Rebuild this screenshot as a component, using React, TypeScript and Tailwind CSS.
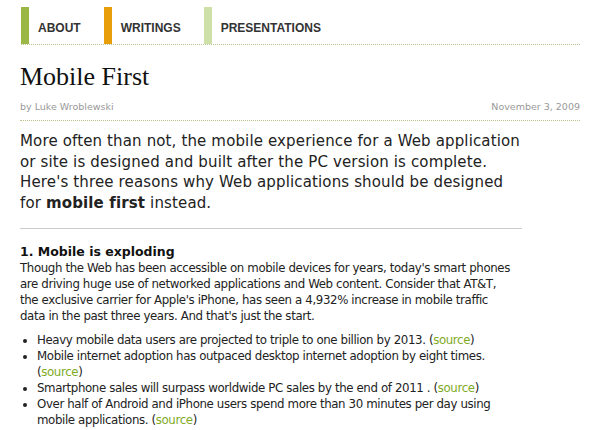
import React from "react";

const sans = { fontFamily: '"DejaVu Sans", Verdana, sans-serif' };

function NavItem({ label, bar }: { label: string; bar: string }) {
  return (
    <div className="flex items-stretch mr-[23px]">
      <div className={`w-[8px] ${bar}`} />
      <a className="self-end pl-[9px] pb-[10px] text-[12px] font-bold leading-none text-[#333] [font-family:'Liberation_Sans',Arial,sans-serif]">
        {label}
      </a>
    </div>
  );
}

function Source() {
  return (
    <>
      (<a className="text-[#7fab1f]">source</a>)
    </>
  );
}

export default function App() {
  return (
    <div className="w-[600px] h-[430px] overflow-hidden bg-white pl-[20px] pr-[20px]" style={sans}>
      <nav className="ml-[1px] mt-[7px] flex h-[38px] border-b border-dotted border-[#b5c48a]">
        <NavItem label="ABOUT" bar="bg-[#9bb847]" />
        <NavItem label="WRITINGS" bar="bg-[#e89d0b]" />
        <NavItem label="PRESENTATIONS" bar="bg-[#cde0a9]" />
      </nav>

      <h1 className="mt-[17px] text-[26px] leading-[30px] text-[#111] [font-family:'Liberation_Serif',Georgia,serif]">
        Mobile First
      </h1>
      <div className="mt-[9px] flex justify-between pb-[7px] border-b border-dotted border-[#b5c48a] text-[9.5px] leading-[12px] text-[#999]">
        <span>by Luke Wroblewski</span>
        <span>November 3, 2009</span>
      </div>

      <p className="mt-[10px] w-[504px] text-[15px] tracking-[0.14px] leading-[20.5px] text-[#222]">
        More often than not, the mobile experience for a Web application or site is designed and built after the PC
        version is complete. Here's three reasons why Web applications should be designed for{" "}
        <strong>mobile first</strong> instead.
      </p>

      <hr className="mt-[15px] w-[502px] border-t border-[#ccc]" />

      <h3 className="mt-[15px] text-[12.5px] font-bold leading-[16px] text-[#111]">1. Mobile is exploding</h3>
      <p className="w-[495px] text-[11.8px] tracking-[-0.38px] leading-[16px] text-[#222]">
        Though the Web has been accessible on mobile devices for years, today's smart phones are driving huge use of
        networked applications and Web content. Consider that AT&amp;T, the exclusive carrier for Apple's iPhone, has
        seen a 4,932% increase in mobile traffic data in the past three years. And that's just the start.
      </p>

      <ul className="mt-[8px] w-[495px] list-disc pl-[17px] text-[11.8px] tracking-[-0.38px] leading-[16px] text-[#222]">
        <li>
          Heavy mobile data users are projected to triple to one billion by 2013. <Source />
        </li>
        <li>
          Mobile internet adoption has outpaced desktop internet adoption by eight times. <Source />
        </li>
        <li>
          Smartphone sales will surpass worldwide PC sales by the end of 2011 . <Source />
        </li>
        <li>
          Over half of Android and iPhone users spend more than 30 minutes per day using mobile applications.{" "}
          <Source />
        </li>
      </ul>
    </div>
  );
}
